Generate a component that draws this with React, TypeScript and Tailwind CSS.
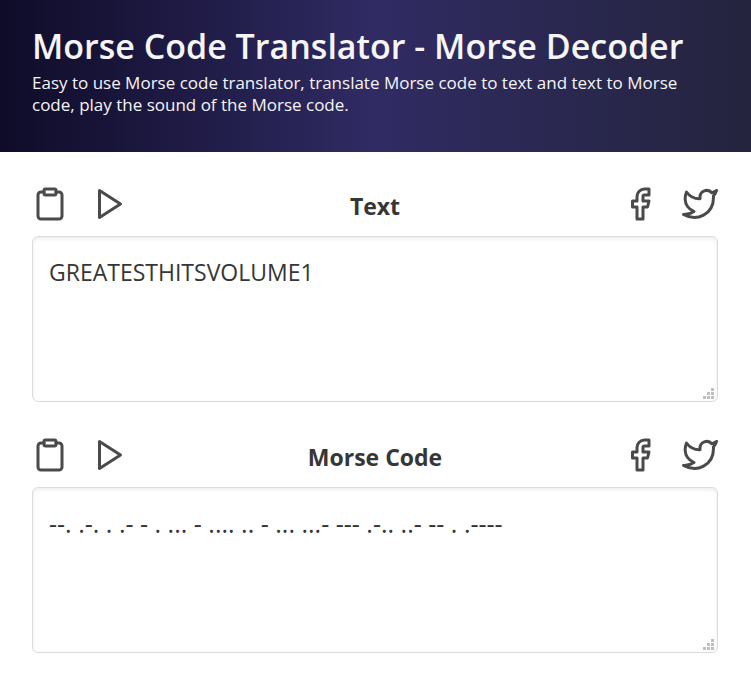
import { useState } from "react";
import type { ReactNode } from "react";

function Icon({ children }: { children: ReactNode }) {
  return (
    <svg
      viewBox="0 0 24 24"
      className="block size-9"
      fill="none"
      stroke="currentColor"
      strokeWidth="2"
      strokeLinecap="round"
      strokeLinejoin="round"
      aria-hidden="true"
    >
      {children}
    </svg>
  );
}

function IconButton({ label, children }: { label: string; children: ReactNode }) {
  return (
    <button type="button" aria-label={label} className="text-[#4a4a4a]">
      <Icon>{children}</Icon>
    </button>
  );
}

function IconLink({ label, children }: { label: string; children: ReactNode }) {
  return (
    <a href="#" aria-label={label} className="text-[#4a4a4a]">
      <Icon>{children}</Icon>
    </a>
  );
}

interface PanelProps {
  id: string;
  title: string;
  initial: string;
  textSize: string;
}

function Panel({ id, title, initial, textSize }: PanelProps) {
  const [value, setValue] = useState(initial);
  return (
    <section>
      <div className="flex items-center justify-between">
        <div className="flex gap-6">
          <IconButton label={`Copy ${title}`}>
            <path d="M16 4h2a2 2 0 0 1 2 2v14a2 2 0 0 1-2 2H6a2 2 0 0 1-2-2V6a2 2 0 0 1 2-2h2" />
            <rect x="8" y="2" width="8" height="4" rx="1" ry="1" />
          </IconButton>
          <IconButton label={`Play ${title}`}>
            <path d="M5 3l14 9-14 9z" />
          </IconButton>
        </div>
        <label htmlFor={id} className="pt-1 text-[23px] leading-8 font-bold text-[#363636]">
          {title}
        </label>
        <div className="flex gap-6">
          <IconLink label={`Share ${title} on Facebook`}>
            <path d="M18 2h-3a5 5 0 0 0-5 5v3H7v4h3v8h4v-8h3l1-4h-4V7a1 1 0 0 1 1-1h3z" />
          </IconLink>
          <IconLink label={`Share ${title} on Twitter`}>
            <path d="M23 3a10.9 10.9 0 0 1-3.14 1.53 4.48 4.48 0 0 0-7.86 3v1A10.66 10.66 0 0 1 3 4s-4 9 5 13a11.64 11.64 0 0 1-7 2c9 5 20 0 20-11.5a4.5 4.5 0 0 0-.08-.83A7.72 7.72 0 0 0 23 3z" />
          </IconLink>
        </div>
      </div>
      <div className="relative mt-3.5">
        <textarea
          id={id}
          value={value}
          onChange={(e) => setValue(e.target.value)}
          spellCheck={false}
          className={`block h-[166px] w-full resize-none rounded-md border border-[#dbdbdb] bg-white px-4 py-[17px] leading-9 text-[#363636] shadow-[inset_0_2px_4px_rgba(10,10,10,0.07)] outline-none ${textSize}`}
        />
        <svg
          viewBox="0 0 11 11"
          className="pointer-events-none absolute right-[4px] bottom-[3px] h-[11px] w-[11px] text-[#bfbfbf]"
          fill="currentColor"
          aria-hidden="true"
        >
          <path d="M8 0h3v3H8zM4 4h3v3H4zM8 4h3v3H8zM0 8h3v3H0zM4 8h3v3H4zM8 8h3v3H8z" />
        </svg>
      </div>
    </section>
  );
}

export default function App() {
  return (
    <div className="min-h-screen bg-white font-['Open_Sans','Noto_Sans',sans-serif]">
      <header className="bg-linear-to-r from-[#0f0c29] via-[#302b63] to-[#24243e] px-8 pt-6 pb-9 text-[#f5f5f5]">
        <h1 className="pb-1 text-[34px] leading-11 font-semibold">
          Morse Code Translator - Morse Decoder
        </h1>
        <p className="text-[17px] leading-[22px]">
          Easy to use Morse code translator, translate Morse code to text and text to Morse code, play
          the sound of the Morse code.
        </p>
      </header>
      <main className="flex flex-col gap-[35px] pt-[34px] pr-[33px] pl-8">
        <Panel id="text" title="Text" initial="GREATESTHITSVOLUME1" textSize="text-[23px]" />
        <Panel
          id="morse"
          title="Morse Code"
          initial="--. .-. . .- - . ... - .... .. - ... ...- --- .-.. ..- -- . .----"
          textSize="text-[25px]"
        />
      </main>
    </div>
  );
}
